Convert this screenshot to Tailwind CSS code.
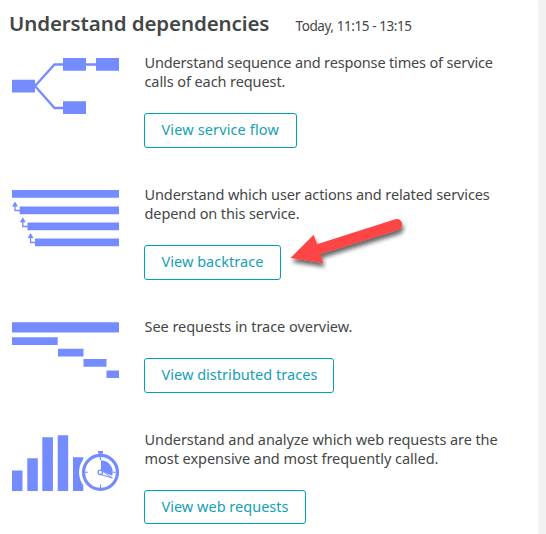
<!DOCTYPE html>
<html lang="en"><head><meta charset="utf-8"><title>Understand dependencies</title><script src="https://cdn.jsdelivr.net/npm/@tailwindcss/browser@4"></script></head>
<body class="bg-[#f2f2f2]">
<main class="relative w-[538px] h-[534px] overflow-hidden rounded-tr-[2px] bg-white font-['Noto_Sans',sans-serif] text-[14.5px] leading-[19px] text-[#454646] whitespace-nowrap">
  <header class="flex items-baseline pl-[9px] pt-[9px] h-[53px]">
    <h1 class="w-[286.500px] text-[20.5px] leading-[28px] font-semibold tracking-[-0.1px]">Understand dependencies</h1>
    <span class="text-[13.5px] tracking-[-0.42px]">Today, 11:15 - 13:15</span>
  </header>
  <div class="flex flex-col gap-[37px] pl-[12px]">
    <section class="flex gap-[25px]">
      <svg class="w-[107px] h-[80px] shrink-0" viewBox="0 0 107 80" fill="#748cff">
        <path d="M23 33L42.500 11.500H84M23 33L42.500 55H52" fill="none" stroke="#748cff" stroke-width="2.300"/>
        <path d="M0 26.700h23v12.800H0zM51 5h23v12.800H51zM84 5h23v12.800H84zM51 48.300h23v12.800H51z"/>
      </svg>
      <div class="flex flex-col items-start">
        <p class="pl-[0.5px]"><span class="block tracking-[-0.16px]">Understand sequence and response times of service</span><span class="block tracking-[-0.09px]">calls of each request.</span></p>
        <button class="mt-[22px] h-[35px] w-[153px] rounded-[3px] border border-[#00a1b2] pl-[16.500px] pb-[2px] text-left tracking-[0.13px] text-[#14a0b5]">View service flow</button>
      </div>
    </section>
    <section class="flex gap-[25px]">
      <svg class="w-[107px] h-[80px] shrink-0" viewBox="0 0 107 80" fill="#748cff">
        <path d="M0 5h107v7.800H0zM7.700 21.500H107v7.700H7.700zM15.500 37.500H107v7.700H15.500zM23 53.500h84v7.700H23z"/>
        <path d="M0 21.500L3 16.500l3 5zM7.800 37.300l3-5 3 5zM15.600 53.100l3-5 3 5z"/>
        <path d="M3 20v5.500h5M10.800 36v5.500h5M18.600 52v5.500h5" fill="none" stroke="#748cff" stroke-width="1.300"/>
      </svg>
      <div class="flex flex-col items-start">
        <p class="pl-[0.5px]"><span class="block tracking-[-0.11px]">Understand which user actions and related services</span><span class="block tracking-[-0.1px]">depend on this service.</span></p>
        <button class="mt-[22px] h-[35px] w-[137px] rounded-[3px] border border-[#00a1b2] pl-[16.500px] pb-[2px] text-left tracking-[0.03px] text-[#14a0b5]">View backtrace</button>
      </div>
    </section>
    <section class="flex gap-[25px]">
      <svg class="w-[107px] h-[70px] shrink-0" viewBox="0 0 107 70" fill="#748cff">
        <path d="M0 5.200h107v10.200H0zM0 20.300h45.700V28H0zM46 31.800h25.500v7.600H46zM71.500 42h23v7.700h-23zM94.500 53.400H107v7.600H94.500z"/>
      </svg>
      <div class="flex flex-col items-start">
        <p class="pl-[0.5px] tracking-[-0.04px]">See requests in trace overview.</p>
        <button class="mt-[22px] h-[35px] w-[190px] rounded-[3px] border border-[#00a1b2] pl-[16.500px] pb-[2px] text-left tracking-[0.03px] text-[#14a0b5]">View distributed traces</button>
      </div>
    </section>
    <section class="flex gap-[25px]">
      <svg class="w-[107px] h-[80px] shrink-0" viewBox="0 0 107 80" fill="#748cff">
        <path d="M0 40.500h10.500V61H0zM15.300 28.300h10.500V61H15.300zM30.300 7.300h10.600V61H30.300zM45.700 5.300h10.500V61H45.700zM61 27.300h10.300V61H61z"/>
        <circle cx="88.500" cy="42.300" r="21.500" fill="white"/>
        <path d="M86 21h5v2.500h-1.300V26h-2.400v-2.500H86z"/>
        <circle cx="88.500" cy="42.300" r="17" fill="none" stroke="#748cff" stroke-width="3.200"/>
        <path d="M88.500 26v4M88.500 54.500v4M72.200 42.300h4M100.800 42.300h4" fill="none" stroke="#748cff" stroke-width="1.100"/>
        <path d="M89 30.200a12 12 0 0 1 11.200 15.500L91 41.500l-2-2.300z"/>
        <path d="M89.500 40.500L100.500 48 88.500 44.500z" fill="white" stroke="#748cff" stroke-width="1"/>
        <circle cx="88.300" cy="42.300" r="2.200" fill="white" stroke="#748cff" stroke-width="1.300"/>
      </svg>
      <div class="flex flex-col items-start">
        <p class="pl-[0.5px]"><span class="block tracking-[-0.07px]">Understand and analyze which web requests are the</span><span class="block tracking-[-0.04px]">most expensive and most frequently called.</span></p>
        <button class="mt-[22px] h-[34px] w-[162px] rounded-[3px] border border-[#00a1b2] pl-[16.500px] pb-[2px] text-left tracking-[0.01px] text-[#14a0b5]">View web requests</button>
      </div>
    </section>
  </div>
  <svg class="absolute left-[280px] top-[205px] w-[140px] h-[80px]" viewBox="280 205 140 80">
    <defs><filter id="s" x="-20%" y="-20%" width="140%" height="150%"><feDropShadow dx="1.500" dy="4" stdDeviation="2.200" flood-color="#000" flood-opacity=".6"/></filter></defs>
    <path d="M290.500 258L313.700 234.800 317 244.200 394.500 219.500Q400 217.800 402 223Q402.800 228 398 230L320.500 254 323 263z" fill="#fe4444" filter="url(#s)"/>
  </svg>
</main>
</body></html>
